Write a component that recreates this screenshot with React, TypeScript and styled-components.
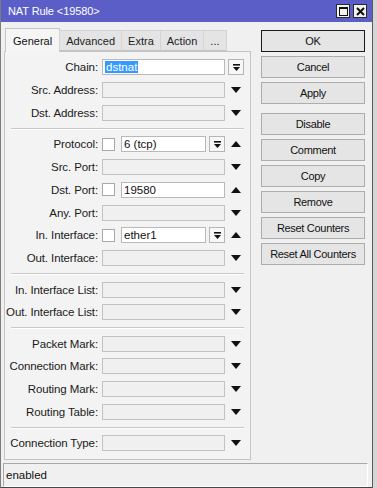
import React from "react";
import styled, { createGlobalStyle } from "styled-components";

type Trail = "down" | "up" | "combo" | "none";
type Kind = "empty" | "select" | "checkCombo" | "checkText";

interface FieldRow {
  label: string;
  kind: Kind;
  value?: string;
  trail: Trail;
}

const groups: FieldRow[][] = [
  [
    { label: "Chain:", kind: "select", value: "dstnat", trail: "combo" },
    { label: "Src. Address:", kind: "empty", trail: "down" },
    { label: "Dst. Address:", kind: "empty", trail: "down" },
  ],
  [
    { label: "Protocol:", kind: "checkCombo", value: "6 (tcp)", trail: "up" },
    { label: "Src. Port:", kind: "empty", trail: "down" },
    { label: "Dst. Port:", kind: "checkText", value: "19580", trail: "up" },
    { label: "Any. Port:", kind: "empty", trail: "down" },
    { label: "In. Interface:", kind: "checkCombo", value: "ether1", trail: "up" },
    { label: "Out. Interface:", kind: "empty", trail: "down" },
  ],
  [
    { label: "In. Interface List:", kind: "empty", trail: "down" },
    { label: "Out. Interface List:", kind: "empty", trail: "down" },
  ],
  [
    { label: "Packet Mark:", kind: "empty", trail: "down" },
    { label: "Connection Mark:", kind: "empty", trail: "down" },
    { label: "Routing Mark:", kind: "empty", trail: "down" },
    { label: "Routing Table:", kind: "empty", trail: "down" },
  ],
  [{ label: "Connection Type:", kind: "empty", trail: "down" }],
];

const tabs = ["General", "Advanced", "Extra", "Action", "..."];

const actions = [
  ["OK", "Cancel", "Apply"],
  ["Disable", "Comment", "Copy", "Remove", "Reset Counters", "Reset All Counters"],
];

const ComboIcon = () => (
  <svg width="9" height="9" viewBox="0 0 9 9">
    <rect x="1" y="1" width="7" height="1.6" fill="#111" />
    <polygon points="1,4 8,4 4.5,8" fill="#111" />
  </svg>
);

const Arrow = ({ up }: { up?: boolean }) => (
  <svg width="10" height="6" viewBox="0 0 10 6">
    <polygon points={up ? "0,6 10,6 5,0" : "0,0 10,0 5,6"} fill="#111" />
  </svg>
);

const App = () => {
  return (
    <>
      <GlobalStyle />
      <Window>
        <TitleBar>
          <span>NAT Rule &lt;19580&gt;</span>
          <TitleButtons>
            <TitleBtn>
              <svg width="9" height="9" viewBox="0 0 9 9">
                <rect x="0.5" y="0.5" width="8" height="8" fill="none" stroke="#111" />
                <rect x="0" y="0" width="9" height="2" fill="#111" />
              </svg>
            </TitleBtn>
            <TitleBtn>
              <svg width="9" height="9" viewBox="0 0 9 9">
                <path d="M1 1 L8 8 M8 1 L1 8" stroke="#111" strokeWidth="2" />
              </svg>
            </TitleBtn>
          </TitleButtons>
        </TitleBar>

        <Body>
          <LeftCol>
            <TabStrip>
              {tabs.map((t, i) => (
                <Tab key={t} active={i === 0}>
                  {t}
                </Tab>
              ))}
            </TabStrip>
            <Panel>
              {groups.map((group, gi) => (
                <React.Fragment key={gi}>
                  {gi > 0 && <Separator />}
                  {group.map((row) => (
                    <Row key={row.label}>
                      <Label>{row.label}</Label>
                      <Field>
                        {row.kind === "empty" && <Input />}
                        {row.kind === "select" && (
                          <Input filled>
                            <Selected>{row.value}</Selected>
                          </Input>
                        )}
                        {(row.kind === "checkCombo" || row.kind === "checkText") && (
                          <>
                            <Check />
                            <Input filled>{row.value}</Input>
                            {row.kind === "checkCombo" && (
                              <DropBtn>
                                <ComboIcon />
                              </DropBtn>
                            )}
                          </>
                        )}
                      </Field>
                      <TrailSlot>
                        {row.trail === "combo" && (
                          <DropBtn>
                            <ComboIcon />
                          </DropBtn>
                        )}
                        {row.trail === "down" && (
                          <ArrowBox>
                            <Arrow />
                          </ArrowBox>
                        )}
                        {row.trail === "up" && (
                          <ArrowBox>
                            <Arrow up />
                          </ArrowBox>
                        )}
                      </TrailSlot>
                    </Row>
                  ))}
                </React.Fragment>
              ))}
            </Panel>
          </LeftCol>

          <RightCol>
            {actions.map((set, si) => (
              <ButtonGroup key={si}>
                {set.map((b) => (
                  <ActionButton key={b} primary={b === "OK"}>
                    {b}
                  </ActionButton>
                ))}
              </ButtonGroup>
            ))}
          </RightCol>
        </Body>

        <StatusBar>enabled</StatusBar>
      </Window>
    </>
  );
};

const GlobalStyle = createGlobalStyle`
  html, body {
    margin: 0;
    padding: 0;
    background: #d6d6d6;
  }
  body {
    font-family: "Liberation Sans", Arial, sans-serif;
    font-size: 11.5px;
    color: #111;
  }
`;

const Window = styled.div`
  width: 373px;
  height: 488px;
  box-sizing: border-box;
  display: flex;
  flex-direction: column;
  background: #f0f0f0;
  border-left: 1px solid #7c7c7c;
  border-right: 1px solid #5a5a5a;
  border-bottom: 1px solid #444;
`;

const TitleBar = styled.div`
  height: 22px;
  flex: none;
  display: flex;
  align-items: center;
  justify-content: space-between;
  padding: 0 5px 0 7px;
  background: #5b5ec7;
  color: #fff;
  font-size: 11px;
  letter-spacing: -0.1px;
`;

const TitleButtons = styled.div`
  display: flex;
  gap: 3px;
`;

const TitleBtn = styled.div`
  width: 14px;
  height: 14px;
  box-sizing: border-box;
  display: flex;
  align-items: center;
  justify-content: center;
  background: #f2f2f2;
  border: 1px solid #2a2a2a;
`;

const Body = styled.div`
  flex: 1;
  display: flex;
  padding: 6px 0 0 3px;
  min-height: 0;
`;

const LeftCol = styled.div`
  width: 247px;
  display: flex;
  flex-direction: column;
`;

const TabStrip = styled.div`
  height: 23px;
  display: flex;
  align-items: flex-end;
  padding-left: 2px;
  position: relative;
  z-index: 1;
`;

const Tab = styled.div<{ active?: boolean }>`
  height: ${(p) => (p.active ? 24 : 21)}px;
  box-sizing: border-box;
  display: flex;
  align-items: center;
  padding: 0 ${(p) => (p.active ? 7 : 6)}px;
  margin-bottom: ${(p) => (p.active ? -1 : 0)}px;
  background: ${(p) => (p.active ? "#f5f5f5" : "#e4e4e4")};
  border: 1px solid ${(p) => (p.active ? "#c4c4c4" : "#d4d4d4")};
  border-bottom: ${(p) => (p.active ? "none" : "1px solid #c4c4c4")};
  margin-left: -1px;
  font-size: 11px;
  color: ${(p) => (p.active ? "#111" : "#222")};
`;

const Panel = styled.div`
  flex: 1;
  box-sizing: border-box;
  border: 1px solid #c4c4c4;
  background: #f3f3f3;
  padding: 4px 0;
`;

const Separator = styled.div`
  height: 8.7px;
  display: flex;
  align-items: center;
  padding: 0 6px 0 6px;
  &::after {
    content: "";
    flex: 1;
    height: 0;
    border-top: 1px solid #c8c8c8;
    border-bottom: 1px solid #fff;
  }
`;

const Row = styled.div`
  height: 22.75px;
  display: flex;
  align-items: center;
`;

const Label = styled.div`
  width: 93px;
  margin-right: 4px;
  text-align: right;
  white-space: nowrap;
  letter-spacing: -0.1px;
  color: #1a1a1a;
`;

const Field = styled.div`
  width: 123px;
  display: flex;
  align-items: center;
`;

const Input = styled.div<{ filled?: boolean }>`
  flex: 1;
  height: 16px;
  box-sizing: border-box;
  display: flex;
  align-items: center;
  padding: 0 2px;
  background: ${(p) => (p.filled ? "#fff" : "#f0f0f0")};
  border: 1px solid ${(p) => (p.filled ? "#b9b9b9" : "#c2c2c2")};
`;

const Selected = styled.span`
  background: #3399ff;
  color: #fff;
  padding: 0 1px;
`;

const Check = styled.div`
  width: 13px;
  height: 13px;
  box-sizing: border-box;
  flex: none;
  margin-right: 6px;
  background: #fff;
  border: 1px solid #a9a9a9;
`;

const DropBtn = styled.div`
  width: 16px;
  height: 16px;
  box-sizing: border-box;
  flex: none;
  margin-left: 3px;
  display: flex;
  align-items: center;
  justify-content: center;
  background: #f7f7f7;
  border: 1px solid #b5b5b5;
`;

const TrailSlot = styled.div`
  width: 20px;
  display: flex;
  align-items: center;
`;

const ArrowBox = styled.div`
  display: flex;
  margin-left: 6px;
`;

const RightCol = styled.div`
  width: 104px;
  margin-left: 10px;
  padding-top: 2px;
  display: flex;
  flex-direction: column;
  gap: 9px;
`;

const ButtonGroup = styled.div`
  display: flex;
  flex-direction: column;
  gap: 4px;
`;

const ActionButton = styled.div<{ primary?: boolean }>`
  height: 22px;
  box-sizing: border-box;
  display: flex;
  align-items: center;
  justify-content: center;
  background: #e5e5e5;
  border: 1px solid ${(p) => (p.primary ? "#1a1a1a" : "#adadad")};
  font-size: 11px;
  letter-spacing: -0.3px;
  white-space: nowrap;
`;

const StatusBar = styled.div`
  height: 24px;
  flex: none;
  box-sizing: border-box;
  margin: 3px 4px 0 2px;
  display: flex;
  align-items: center;
  padding-left: 2px;
  border-top: 1px solid #a8a8a8;
  border-left: 1px solid #a8a8a8;
  border-right: 1px solid #fff;
  border-bottom: 1px solid #fff;
`;

export default App;
